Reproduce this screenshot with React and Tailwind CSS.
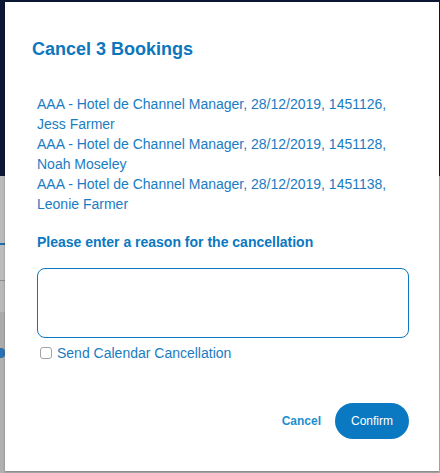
import React from "react";

const bookings = [
    "AAA - Hotel de Channel Manager, 28/12/2019, 1451126, Jess Farmer",
    "AAA - Hotel de Channel Manager, 28/12/2019, 1451128, Noah Moseley",
    "AAA - Hotel de Channel Manager, 28/12/2019, 1451138, Leonie Farmer",
];

const App = () => {
    return (
        <div className="relative w-[440px] h-[473px] overflow-hidden bg-[#b2b2b2] font-['Liberation_Sans',Arial,sans-serif]">
            {/* page behind the modal */}
            <div className="flex h-full">
                <div className="flex flex-col w-[5px]">
                    <div className="h-[176px] bg-[#0c1733]"></div>
                    <div className="h-[67px] bg-[#bababa]"></div>
                    <div className="h-[2px] bg-[#1d6fb0]"></div>
                    <div className="h-[35px] bg-[#bcbcbc]"></div>
                    <div className="h-[1px] bg-[#8e8e8e]"></div>
                    <div className="h-[31px] bg-[#b9b9b9]"></div>
                    <div className="h-[36px] bg-[#ababab]"></div>
                    <div className="h-[10px] bg-[#2a73b0] rounded-r-[4px]"></div>
                    <div className="flex-1 bg-[#b0b0b0]"></div>
                </div>
                <div className="flex-1 flex flex-col">
                    <div className="h-[176px] bg-[#0c1733]"></div>
                    <div className="flex-1 bg-[#b2b2b2]"></div>
                </div>
            </div>

            {/* modal */}
            <div className="absolute left-[5px] top-[2px] w-[434px] h-[469px] bg-white shadow-[0_1px_2px_rgba(0,0,0,0.3)]">
                <div className="pl-[27px] pt-[35px]">
                    <h2 className="text-[18px] leading-[24px] font-bold text-[#0d76bd]">Cancel 3 Bookings</h2>
                </div>

                <div className="pl-[32px] pr-[30px]">
                    <ul className="mt-[33px]">
                        {bookings.map((item, index) => (
                            <li key={index} className="text-[14px] leading-[20px] text-[#1a7cc2]">{item}</li>
                        ))}
                    </ul>

                    <p className="mt-[18px] text-[14px] leading-[20px] font-bold text-[#0b78c1]">
                        Please enter a reason for the cancellation
                    </p>

                    <textarea
                        className="mt-[16px] block w-full h-[70px] border border-[#0b78c1] rounded-[8px] resize-none outline-none px-2 py-1 text-[14px]"
                    ></textarea>

                    <label className="mt-[5px] flex items-center gap-[5px] pl-[3px] text-[14px] leading-[20px] text-[#1a7cc2]">
                        <input
                            type="checkbox"
                            className="appearance-none w-[12px] h-[12px] border border-[#a3a3a3] rounded-[3px] bg-white"
                        />
                        Send Calendar Cancellation
                    </label>

                    <div className="mt-[40px] flex justify-end items-center gap-[14px]">
                        <button className="text-[12px] font-bold text-[#1b8fd0]">Cancel</button>
                        <button className="w-[74px] h-[36px] rounded-full bg-[#0a79c1] text-white text-[12px] flex items-center justify-center">
                            Confirm
                        </button>
                    </div>
                </div>
            </div>
        </div>
    );
};

export default App;
